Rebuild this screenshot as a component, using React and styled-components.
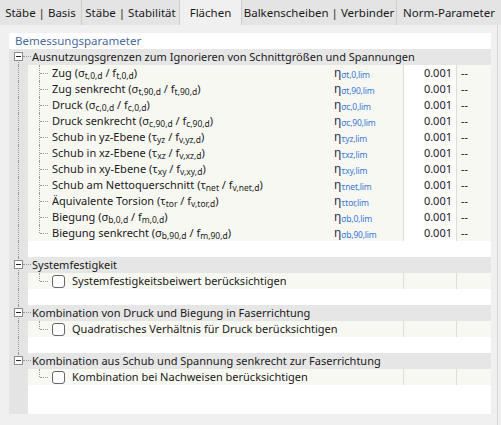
import React from "react";
import styled, { createGlobalStyle, css } from "styled-components";

const GlobalStyle = createGlobalStyle`
  html, body { margin: 0; padding: 0; }
  body {
    background: #f0f0f0;
    font-family: "Noto Sans", "Open Sans", sans-serif;
    font-size: 11px;
    color: #1a1a1a;
    width: 501px;
    height: 425px;
    overflow: hidden;
  }
`;

const Page = styled.div`
  width: 501px;
  height: 425px;
  display: flex;
  flex-direction: column;
`;

const TabBar = styled.div`
  display: flex;
  height: 25px;
  background: #e4e4e4;
`;

const Tab = styled.div`
  height: 100%;
  width: ${(p) => p.$w}px;
  flex: none;
  display: flex;
  align-items: center;
  justify-content: center;
  box-sizing: border-box;
  border-right: 1px solid #cdcdcd;
  background: ${(p) => (p.$active ? "#f0f0f0" : "#e4e4e4")};
  white-space: nowrap;
  color: #1a1a1a;
  font-size: 11.5px;
  ${(p) => p.$last && css`border-right: none;`}
`;

const Body = styled.div`
  flex: 1;
  display: flex;
  padding: 8px 0 11px 9px;
  box-sizing: border-box;
`;

const Panel = styled.div`
  width: 482px;
  display: flex;
  flex-direction: column;
`;

const Gutter = styled.div`
  width: 6px;
  border-right: 1px solid #d6d6d6;
  margin-top: -8px;
  margin-bottom: -11px;
`;

const Header = styled.div`
  height: 16px;
  background: #ffffff;
  color: #4b6b9a;
  padding-left: 6px;
  display: flex;
  align-items: center;
  line-height: 16px;
  font-size: 11.5px;
`;

const Row = styled.div`
  display: flex;
  height: 16px;
  flex: ${(p) => (p.$fill ? 1 : "none")};
`;

const Strip = styled.div`
  width: 19px;
  flex: none;
  background: #e4e4e4;
  position: relative;
  ${(p) =>
    p.$line === "full" &&
    css`
      &::before { content: ""; position: absolute; left: 9px; top: 0; bottom: 0; border-left: 1px dotted #9a9a9a; }
    `}
  ${(p) =>
    p.$line === "top" &&
    css`
      &::before { content: ""; position: absolute; left: 9px; top: 0; height: 8px; border-left: 1px dotted #9a9a9a; }
    `}
  ${(p) =>
    p.$line === "bottom" &&
    css`
      &::before { content: ""; position: absolute; left: 9px; top: 8px; bottom: 0; border-left: 1px dotted #9a9a9a; }
    `}
`;

const Expander = styled.span`
  position: absolute;
  left: 5px;
  top: 3px;
  width: 9px;
  height: 9px;
  box-sizing: border-box;
  border: 1px solid #8a8a8a;
  background: #ffffff;
  z-index: 1;
  &::before {
    content: "";
    position: absolute;
    left: 1px;
    top: 3px;
    width: 5px;
    height: 1px;
    background: #2a2a2a;
  }
  &::after {
    content: "";
    position: absolute;
    left: 8px;
    top: 3px;
    width: 8px;
    border-top: 1px dotted #9a9a9a;
  }
`;

const GroupMain = styled.div`
  flex: 1;
  background: #e6e6e6;
  padding-left: 4px;
  display: flex;
  align-items: center;
  white-space: nowrap;
  line-height: 16px;
`;

const BlankMain = styled.div`
  flex: 1;
  background: #ffffff;
`;

const ItemMain = styled.div`
  flex: 1;
  display: flex;
  background: #f8f8f3;
`;

const Indent = styled.div`
  width: 24px;
  flex: none;
  position: relative;
  &::before {
    content: "";
    position: absolute;
    left: 11px;
    top: 0;
    height: ${(p) => (p.$last ? "8px" : "16px")};
    border-left: 1px dotted #9a9a9a;
  }
  &::after {
    content: "";
    position: absolute;
    left: 12px;
    top: 8px;
    width: 8px;
    border-top: 1px dotted #9a9a9a;
  }
`;

const LabelCell = styled.div`
  width: 282px;
  flex: none;
  display: flex;
  align-items: center;
  white-space: nowrap;
  line-height: 16px;
  overflow: hidden;
`;

const CheckLabel = styled.div`
  width: 351px;
  flex: none;
  display: flex;
  align-items: center;
  gap: 7px;
  white-space: nowrap;
  line-height: 16px;
`;

const Check = styled.span`
  width: 13px;
  height: 13px;
  box-sizing: border-box;
  border: 1px solid #666666;
  border-radius: 3px;
  background: #ffffff;
  flex: none;
`;

const SymbolCell = styled.div`
  width: 69px;
  flex: none;
  display: flex;
  align-items: center;
  color: #1c2c4c;
  font-size: 12px;
  white-space: nowrap;
  line-height: 16px;
`;

const SymSub = styled.span`
  font-size: 8.5px;
  color: #3b78d8;
  position: relative;
  top: 2px;
  letter-spacing: -0.2px;
`;

const ValueCell = styled.div`
  width: 54px;
  flex: none;
  box-sizing: border-box;
  border-left: 1px solid #dcdcdc;
  border-right: 1px solid #dcdcdc;
  background: ${(p) => (p.$empty ? "transparent" : "#ffffff")};
  text-align: right;
  padding-right: 4px;
  line-height: 16px;
`;

const UnitCell = styled.div`
  flex: 1;
  padding-left: 4px;
  line-height: 16px;
`;

const Sub = styled.span`
  font-size: 8.5px;
  position: relative;
  top: 2px;
`;

const params = [
  ["Zug", "σ", "t,0,d", "t,0,d", "σt,0,lim"],
  ["Zug senkrecht", "σ", "t,90,d", "t,90,d", "σt,90,lim"],
  ["Druck", "σ", "c,0,d", "c,0,d", "σc,0,lim"],
  ["Druck senkrecht", "σ", "c,90,d", "c,90,d", "σc,90,lim"],
  ["Schub in yz-Ebene", "τ", "yz", "v,yz,d", "τyz,lim"],
  ["Schub in xz-Ebene", "τ", "xz", "v,xz,d", "τxz,lim"],
  ["Schub in xy-Ebene", "τ", "xy", "v,xy,d", "τxy,lim"],
  ["Schub am Nettoquerschnitt", "τ", "net", "v,net,d", "τnet,lim"],
  ["Äquivalente Torsion", "τ", "tor", "v,tor,d", "τtor,lim"],
  ["Biegung", "σ", "b,0,d", "m,0,d", "σb,0,lim"],
  ["Biegung senkrecht", "σ", "b,90,d", "m,90,d", "σb,90,lim"],
];

const checkGroups = [
  ["Systemfestigkeit", "Systemfestigkeitsbeiwert berücksichtigen"],
  ["Kombination von Druck und Biegung in Faserrichtung", "Quadratisches Verhältnis für Druck berücksichtigen"],
  ["Kombination aus Schub und Spannung senkrecht zur Faserrichtung", "Kombination bei Nachweisen berücksichtigen"],
];

function GroupRow({ title, line }) {
  return (
    <Row>
      <Strip $line={line}>
        <Expander />
      </Strip>
      <GroupMain>{title}</GroupMain>
    </Row>
  );
}

function BlankRow({ line }) {
  return (
    <Row>
      <Strip $line={line} />
      <BlankMain />
    </Row>
  );
}

export default function App() {
  return (
    <Page>
      <GlobalStyle />
      <TabBar>
        <Tab $w={82}>Stäbe | Basis</Tab>
        <Tab $w={98}>Stäbe | Stabilität</Tab>
        <Tab $w={62} $active>Flächen</Tab>
        <Tab $w={155}>Balkenscheiben | Verbinder</Tab>
        <Tab $w={104} $last>Norm-Parameter</Tab>
      </TabBar>
      <Body>
        <Panel>
          <Header>Bemessungsparameter</Header>
          <GroupRow title="Ausnutzungsgrenzen zum Ignorieren von Schnittgrößen und Spannungen" line="bottom" />
          {params.map(([t, g, gs, fs, es], i) => (
            <Row key={t}>
              <Strip $line="full" />
              <ItemMain>
                <Indent $last={i === params.length - 1} />
                <LabelCell>
                  <span>
                    {t} ({g}
                    <Sub>{gs}</Sub> / f<Sub>{fs}</Sub>)
                  </span>
                </LabelCell>
                <SymbolCell>
                  η<SymSub>{es}</SymSub>
                </SymbolCell>
                <ValueCell>0.001</ValueCell>
                <UnitCell>--</UnitCell>
              </ItemMain>
            </Row>
          ))}
          {checkGroups.map(([g, c], i) => (
            <React.Fragment key={g}>
              <BlankRow line="full" />
              <GroupRow title={g} line={i === checkGroups.length - 1 ? "top" : "full"} />
              <Row>
                <Strip $line={i === checkGroups.length - 1 ? "none" : "full"} />
                <ItemMain>
                  <Indent $last />
                  <CheckLabel>
                    <Check />
                    <span>{c}</span>
                  </CheckLabel>
                  <ValueCell $empty />
                  <UnitCell />
                </ItemMain>
              </Row>
            </React.Fragment>
          ))}
          <Row $fill>
            <Strip />
            <BlankMain />
          </Row>
        </Panel>
        <Gutter />
      </Body>
    </Page>
  );
}
